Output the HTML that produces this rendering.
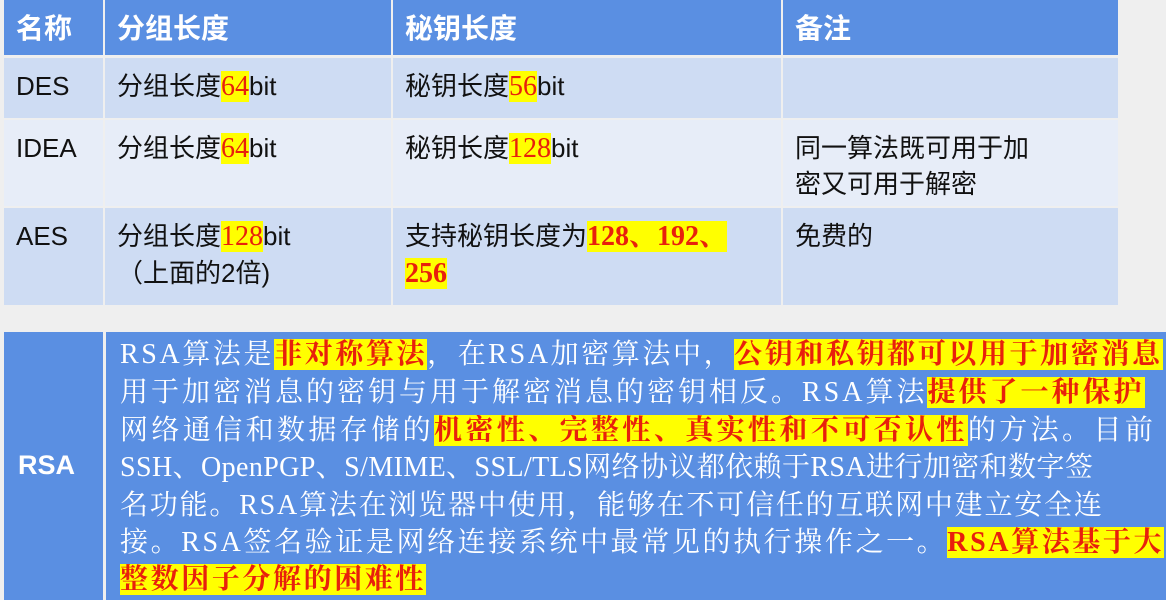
<!DOCTYPE html>
<html><head><meta charset="utf-8"><style>
body{margin:0;width:1166px;height:600px;background:#efefef;position:relative;overflow:hidden;font-family:"Liberation Sans","Noto Sans CJK SC",sans-serif;}
.c{position:absolute;box-sizing:border-box;}
.h{background:#5a8fe2;color:#fff;font-weight:bold;font-size:28px;padding:7px 0 0 12px;}
.r1{background:#cedcf3;}
.r2{background:#e7edf8;}
.t{font-size:26px;color:#111;padding:10px 0 0 12px;line-height:36px;}
.y{background:#ffff00;color:#e8200c;font-family:"Liberation Serif","Noto Serif CJK SC",serif;font-size:28px;}
.b{background:#5a8fe2;}
.ln{position:absolute;left:120px;white-space:nowrap;font-family:"Liberation Serif","Noto Serif CJK SC",serif;font-size:28px;color:#fff;line-height:36px;}
.ln .y{font-family:inherit;font-weight:bold;}
</style></head><body>
<div class="c h" style="left:4px;top:0;width:99px;height:55px;">名称</div>
<div class="c h" style="left:105px;top:0;width:286px;height:55px;">分组长度</div>
<div class="c h" style="left:393px;top:0;width:388px;height:55px;">秘钥长度</div>
<div class="c h" style="left:783px;top:0;width:335px;height:55px;">备注</div>

<div class="c r1 t" style="left:4px;top:58px;width:99px;height:60px;">DES</div>
<div class="c r1 t" style="left:105px;top:58px;width:286px;height:60px;">分组长度<span class="y">64</span>bit</div>
<div class="c r1 t" style="left:393px;top:58px;width:388px;height:60px;">秘钥长度<span class="y">56</span>bit</div>
<div class="c r1 t" style="left:783px;top:58px;width:335px;height:60px;"></div>

<div class="c r2 t" style="left:4px;top:120px;width:99px;height:86px;">IDEA</div>
<div class="c r2 t" style="left:105px;top:120px;width:286px;height:86px;">分组长度<span class="y">64</span>bit</div>
<div class="c r2 t" style="left:393px;top:120px;width:388px;height:86px;">秘钥长度<span class="y">128</span>bit</div>
<div class="c r2 t" style="left:783px;top:120px;width:335px;height:86px;padding-top:10px;">同一算法既可用于加<br>密又可用于解密</div>

<div class="c r1 t" style="left:4px;top:208px;width:99px;height:97px;">AES</div>
<div class="c r1 t" style="left:105px;top:208px;width:286px;height:97px;">分组长度<span class="y">128</span>bit<br>（上面的2倍)</div>
<div class="c r1 t" style="left:393px;top:208px;width:388px;height:97px;">支持秘钥长度为<span class="y" style="font-weight:bold">128、192、<br>256</span></div>
<div class="c r1 t" style="left:783px;top:208px;width:335px;height:97px;">免费的</div>

<div class="c b" style="left:4px;top:332px;width:99px;height:268px;color:#fff;font-weight:bold;font-size:27px;padding:118px 0 0 14px;">RSA</div>
<div class="c b" style="left:106px;top:332px;width:1060px;height:268px;"></div>
<div class="ln" style="top:337px;letter-spacing:2.6px;">RSA算法是<span class="y">非对称算法</span>，在RSA加密算法中，<span class="y">公钥和私钥都可以用于加密消息</span></div>
<div class="ln" style="top:375px;letter-spacing:3px;">用于加密消息的密钥与用于解密消息的密钥相反。RSA算法<span class="y">提供了一种保护</span></div>
<div class="ln" style="top:413px;letter-spacing:3.4px;">网络通信和数据存储的<span class="y">机密性、完整性、真实性和不可否认性</span>的方法。目前</div>
<div class="ln" style="top:450px;letter-spacing:0.4px;">SSH、OpenPGP、S/MIME、SSL/TLS网络协议都依赖于RSA进行加密和数字签</div>
<div class="ln" style="top:488px;letter-spacing:1.8px;">名功能。RSA算法在浏览器中使用，能够在不可信任的互联网中建立安全连</div>
<div class="ln" style="top:525px;letter-spacing:2.6px;">接。RSA签名验证是网络连接系统中最常见的执行操作之一。<span class="y">RSA算法基于大</span></div>
<div class="ln" style="top:562px;letter-spacing:2.6px;"><span class="y">整数因子分解的困难性</span></div>
</body></html>
